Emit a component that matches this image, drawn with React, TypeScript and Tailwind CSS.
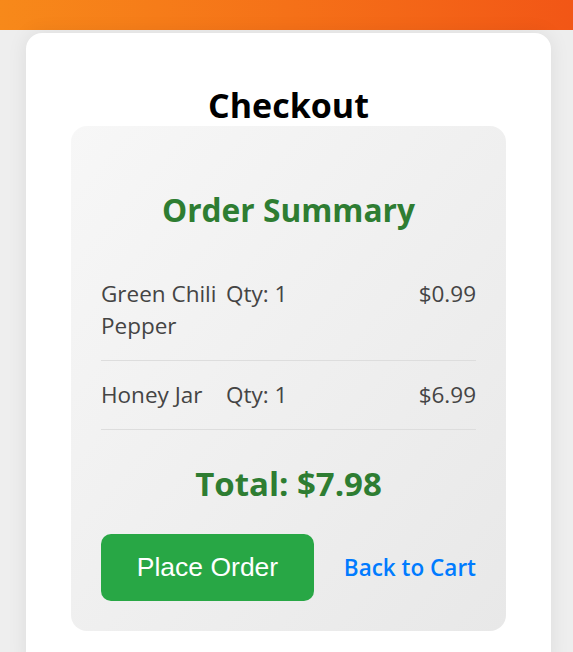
const items = [
  { name: "Green Chili Pepper", qty: 1, price: "$0.99" },
  { name: "Honey Jar", qty: 1, price: "$6.99" },
];

export default function App() {
  return (
    <div
      className="min-h-[652px] bg-[#eeeeee]"
      style={{ fontFamily: '"Open Sans", "Noto Sans", sans-serif' }}
    >
      <div className="h-[30px] bg-gradient-to-r from-[#f7891a] to-[#f25616]" />

      <div className="ml-[26px] mt-[3px] w-[525px] rounded-2xl bg-white px-[45px] pt-[51px] pb-10 shadow-[0_0_20px_rgba(0,0,0,0.08)]">
        <h1 className="text-center text-[34px] font-bold leading-[42px] text-black">Checkout</h1>

        <div className="rounded-2xl bg-gradient-to-br from-[#f7f7f7] to-[#e8e8e8] px-[30px] pt-[62px] pb-[30px]">
          <h2 className="text-center text-[31.7px] font-bold leading-[44px] text-[#2e7d32]">Order Summary</h2>

          <div className="mt-[28px]">
            {items.map((item) => (
              <div
                key={item.name}
                className="flex border-b border-[#dddddd] py-[18px] text-[22.5px] leading-[32px] text-[#444444]"
              >
                <span className="flex-1">{item.name}</span>
                <span className="flex-1">Qty: {item.qty}</span>
                <span className="flex-1 text-right">{item.price}</span>
              </div>
            ))}
          </div>

          <p className="mt-[32px] text-center text-[33px] font-bold leading-[44px] text-[#2e7d32]">Total: $7.98</p>

          <div className="mt-[28px] flex items-center justify-between">
            <button
              className="h-[67px] w-[213px] rounded-[10px] bg-[#28a745] text-[26.5px] text-white"
              style={{ fontFamily: '"Liberation Sans", Arial, sans-serif' }}
            >
              Place Order
            </button>
            <a href="#" className="text-[22.5px] font-semibold text-[#007bff]">Back to Cart</a>
          </div>
        </div>
      </div>
    </div>
  );
}
